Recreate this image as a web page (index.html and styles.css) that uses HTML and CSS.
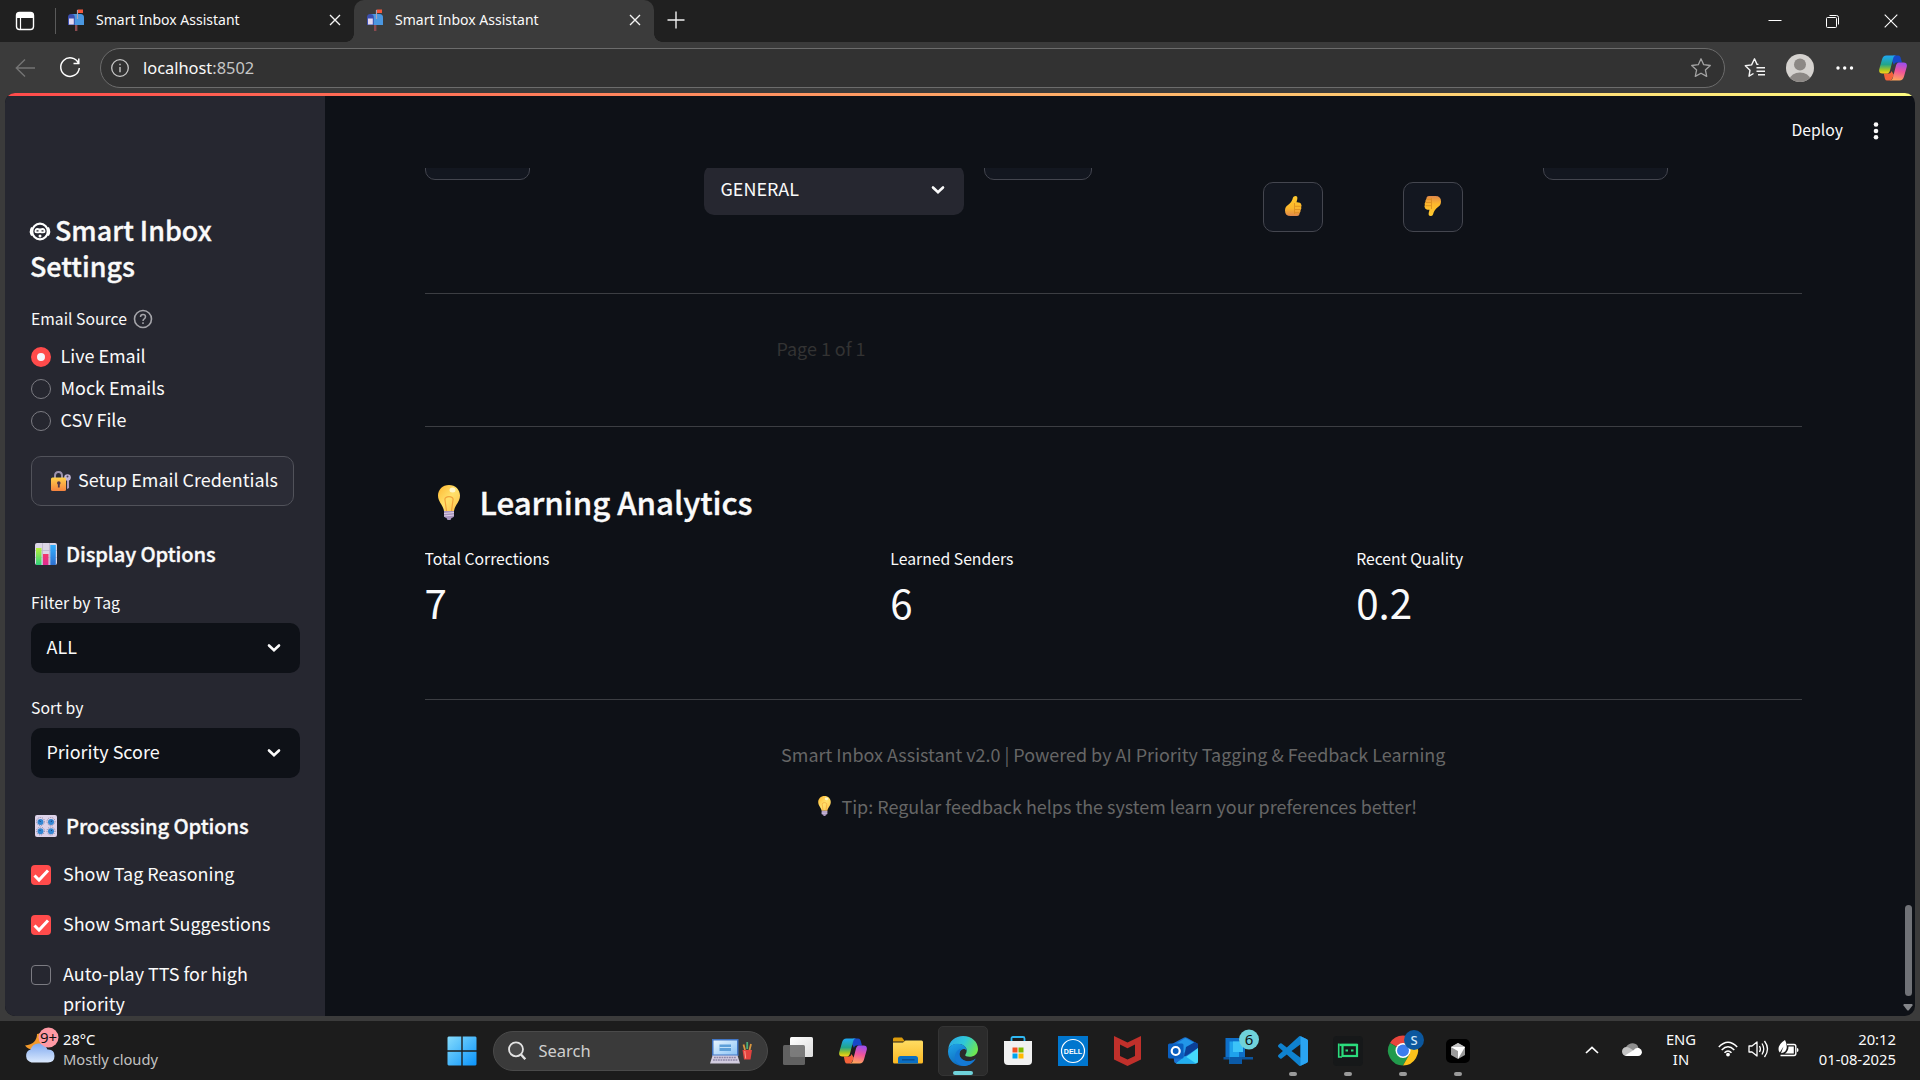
FILE: index.html
```
<!DOCTYPE html>
<html lang="en">
<head>
<meta charset="utf-8">
<title>Smart Inbox Assistant</title>
<link rel="stylesheet" href="styles.css">
</head>
<body>
<svg class="defs" aria-hidden="true">
  <defs>
    <linearGradient id="gBulb" x1="0" y1="0" x2="1" y2="1"><stop offset="0" stop-color="#ffb52e"/><stop offset=".5" stop-color="#ffe16b"/><stop offset="1" stop-color="#ffc04a"/></linearGradient>
    <linearGradient id="gThumb" x1="0" y1="0" x2="0" y2="1"><stop offset="0" stop-color="#ffca2e"/><stop offset=".6" stop-color="#fdb72c"/><stop offset="1" stop-color="#e0884a"/></linearGradient>
    <linearGradient id="gLock" x1="0" y1="0" x2="0" y2="1"><stop offset="0" stop-color="#ffd04a"/><stop offset="1" stop-color="#f5833f"/></linearGradient>
    <linearGradient id="gGreen" x1="0" y1="0" x2="0" y2="1"><stop offset="0" stop-color="#b9f03c"/><stop offset="1" stop-color="#2fd07c"/></linearGradient>
    <linearGradient id="gPink" x1="0" y1="0" x2="0" y2="1"><stop offset="0" stop-color="#f2386b"/><stop offset="1" stop-color="#e02a92"/></linearGradient>
    <linearGradient id="gBlue" x1="0" y1="0" x2="0" y2="1"><stop offset="0" stop-color="#33b0ff"/><stop offset="1" stop-color="#2d6fd0"/></linearGradient>
    <linearGradient id="gCopL" x1=".3" y1="0" x2=".3" y2="1"><stop offset="0" stop-color="#1fa8f5"/><stop offset=".5" stop-color="#22a58b"/><stop offset=".8" stop-color="#a8c622"/><stop offset="1" stop-color="#ffd21c"/></linearGradient>
    <linearGradient id="gCopR" x1=".7" y1="0" x2=".5" y2="1"><stop offset="0" stop-color="#9a4ef0"/><stop offset=".5" stop-color="#f0549a"/><stop offset="1" stop-color="#ffa35c"/></linearGradient>
    <linearGradient id="gWin" x1="0" y1="0" x2="1" y2="1"><stop offset="0" stop-color="#86dcfc"/><stop offset="1" stop-color="#0a93fb"/></linearGradient>
    <linearGradient id="gFold" x1="0" y1="0" x2="0" y2="1"><stop offset="0" stop-color="#ffdc62"/><stop offset="1" stop-color="#fbb823"/></linearGradient>
    <linearGradient id="gEdgeT" x1="0" y1=".2" x2="1" y2=".6"><stop offset="0" stop-color="#2ba8e6"/><stop offset=".5" stop-color="#2fc8d8"/><stop offset="1" stop-color="#6fe84e"/></linearGradient>
    <linearGradient id="gEdgeB" x1="0" y1="0" x2=".6" y2="1"><stop offset="0" stop-color="#1ea6ea"/><stop offset="1" stop-color="#0d62b8"/></linearGradient>
    <linearGradient id="gCloud" x1="0" y1="0" x2="0" y2="1"><stop offset="0" stop-color="#7fa9f0"/><stop offset="1" stop-color="#dbe9fd"/></linearGradient>
    <linearGradient id="gTask" x1="0" y1="0" x2="1" y2="1"><stop offset="0" stop-color="#ffffff"/><stop offset="1" stop-color="#dcdcdc"/></linearGradient>
    <linearGradient id="gLap" x1="0" y1="0" x2="1" y2="1"><stop offset="0" stop-color="#e8f5ff"/><stop offset="1" stop-color="#8cc4f5"/></linearGradient>
    <symbol id="copilot" viewBox="0 0 28 26">
      <path d="M14 .5H19C21 .5 21.500 2 22 4L23 7.500H17.500C16 7.500 15.500 8.500 15 10L13 6Z" fill="#1748c8"/>
      <path d="M8 25.500C6 25.500 6 23.500 5.500 22L4.800 18.500H10C11.500 18.500 12 17.500 12.500 16L15 20 12 25.500Z" fill="#f4633a"/>
      <path d="M7.500.5H17C15 .8 14.500 2 14 4L11 15.500C10.300 18 9 18.500 7 18.500H3.500C.5 18.500-.3 16.500.3 14L3 4.500C3.800 1.800 5 .5 7.500.5Z" fill="url(#gCopL)"/>
      <path d="M20.500 25.500H11C13 25.200 13.500 24 14 22L17 10.500C17.700 8 19 7.500 21 7.500H24.500C27.500 7.500 28.300 9.500 27.700 12L25 21.500C24.200 24.200 23 25.500 20.500 25.500Z" fill="url(#gCopR)"/>
    </symbol>
    <symbol id="mailbox" viewBox="0 0 16 22">
      <rect x="7" y="14" width="2.400" height="8" fill="#8a4a4f"/>
      <path d="M4 5h8.500A3.500 3.500 0 0 1 16 8.500V16H4Z" fill="#4a97e0"/>
      <path d="M0 8.500A3.300 3.300 0 0 1 6.800 8.500V16H0Z" fill="#3b4fb0"/>
      <path d="M1 9.500H5.800V15.500H1Z" fill="#e4d8ee"/>
      <path d="M9.500 10V.8" stroke="#a9a3b8" stroke-width="1.200"/>
      <rect x="10" y=".5" width="5" height="3.500" fill="#f2583c"/>
    </symbol>
    <symbol id="bulb" viewBox="0 0 22 35">
      <path d="M11 0C17.500 0 22 4.800 22 10.500 22 17 17 19.500 16 26H6C5 19.500 0 17 0 10.500 0 4.800 4.500 0 11 0Z" fill="url(#gBulb)"/>
      <path d="M8.500 26L7 15C5.800 10.500 16.200 10.500 15 15L13.500 26" fill="none" stroke="#f2a23a" stroke-width="1.200"/>
      <ellipse cx="14.500" cy="5" rx="3" ry="2.500" fill="#fff6c8"/>
      <path d="M6 26H16V31.500Q15 32.500 13.500 33L12.500 35H9.500L8.500 33Q7 32.500 6 31.500Z" fill="#a894bd"/>
      <path d="M6 28.500L16 27.500M6 31L16 30" stroke="#dccfe6" stroke-width="1"/>
    </symbol>
    <symbol id="thumb" viewBox="0 0 17 20">
      <path d="M8 1.500Q8.500 0 10.500 0 12.800.2 12.300 3L11.500 6.200Q15.500 6 16 8 17 9.500 16.200 11 16.700 13 15.600 14 15.800 16 14.600 17 14.600 20 12 20H5.500Q0 20 0 14.500 0 10.800 3 9 6.800 6.500 8 1.500Z" fill="url(#gThumb)"/>
      <path d="M9.500 7V18M10 10.300H15.500M10 13.500H15.200M10 16.700H14.400" stroke="#d98b1f" stroke-width=".8" fill="none"/>
    </symbol>
    <symbol id="chevron" viewBox="0 0 14 10"><path d="M2 2.500L7 7.300 12 2.500" fill="none" stroke="#fafafa" stroke-width="2.600" stroke-linecap="round"/></symbol>
    <symbol id="tick" viewBox="0 0 20 20"><path d="M3.500 10.500L8 15 17 5.500" fill="none" stroke="#fff" stroke-width="3"/></symbol>
    <symbol id="close" viewBox="0 0 12 12"><path d="M1 1L11 11M11 1L1 11" stroke="#f4f4f4" stroke-width="1.400"/></symbol>
  </defs>
</svg>

<header class="titlebar">
  <svg class="tab-actions" width="20" height="20" viewBox="0 0 20 20"><rect x="1.500" y="1.500" width="17" height="17" rx="3" fill="none" stroke="#fff" stroke-width="1.400"/><path d="M1.500 7V4.500A3 3 0 0 1 4.500 1.500H15.500A3 3 0 0 1 18.500 4.500V7Z" fill="#fff"/><path d="M5.500 6V18.500" stroke="#fff" stroke-width="1.200"/></svg>
  <span class="tab-divider"></span>
  <div class="tab">
    <svg width="16" height="22"><use href="#mailbox"/></svg>
    <span class="tab-title">Smart Inbox Assistant</span>
    <svg width="12" height="12"><use href="#close"/></svg>
  </div>
  <div class="tab active">
    <svg width="16" height="22"><use href="#mailbox"/></svg>
    <span class="tab-title">Smart Inbox Assistant</span>
    <svg width="12" height="12"><use href="#close"/></svg>
  </div>
  <svg class="new-tab" width="18" height="18" viewBox="0 0 18 18"><path d="M9 .5V17.500M.5 9H17.500" stroke="#f0f0f0" stroke-width="1.400"/></svg>
  <div class="window-controls">
    <svg width="14" height="14" viewBox="0 0 14 14"><path d="M.5 6.500H13.500" stroke="#fff"/></svg>
    <svg width="14" height="14" viewBox="0 0 14 14"><rect x=".5" y="3.500" width="10" height="10" rx="1" fill="none" stroke="#fff"/><path d="M3.500 1.500H10.500Q12.500 1.500 12.500 3.500V10.500" fill="none" stroke="#fff"/></svg>
    <svg width="14" height="14" viewBox="0 0 14 14"><path d="M.7.7L13.300 13.300M13.300.7L.7 13.300" stroke="#fff" stroke-width="1.100"/></svg>
  </div>
</header>

<div class="toolbar">
  <svg width="20" height="20" viewBox="0 0 20 20"><path d="M10 1.500L1.300 10 10 18.500M1.300 10H20" fill="none" stroke="#747474" stroke-width="1.400"/></svg>
  <svg class="reload" width="22" height="22" viewBox="0 0 22 22"><path d="M19.500 6.200A9.300 9.300 0 1 0 20.300 11M19.800 1.500V6.500H14.500" fill="none" stroke="#fff" stroke-width="1.500"/></svg>
  <div class="address">
    <svg width="20" height="20" viewBox="0 0 20 20"><circle cx="10" cy="10" r="8.300" fill="none" stroke="#c8c8c8" stroke-width="1.300"/><path d="M10 9V14.200M10 5.800V7.300" stroke="#c8c8c8" stroke-width="1.400"/></svg>
    <span class="url">localhost<span class="port">:8502</span></span>
    <svg width="22" height="22" viewBox="0 0 22 22"><path d="M11 1.800L13.700 7.700 20.300 8.500 15.400 12.900 16.700 19.400 11 16.200 5.300 19.400 6.600 12.900 1.700 8.500 8.300 7.700Z" fill="none" stroke="#a3a3a3" stroke-width="1.300" stroke-linejoin="round"/></svg>
  </div>
  <svg class="favorites" width="22" height="22" viewBox="0 0 22 22"><path d="M9.500 16.500L5 19.200 6 13.200 1.300 8.800 7.600 7.900 10.500 1.800 13 7.400H14.500M12.500 10.800H21M12.500 14.300H21M14 17.800H21" fill="none" stroke="#f4f4f4" stroke-width="1.400" stroke-linejoin="round"/></svg>
  <svg class="avatar" width="28" height="28" viewBox="0 0 28 28"><clipPath id="cAv"><circle cx="14" cy="14" r="14"/></clipPath><g clip-path="url(#cAv)"><rect width="28" height="28" fill="#d5d2cf"/><circle cx="14" cy="10.500" r="6" fill="#8c8885"/><ellipse cx="14" cy="25" rx="10" ry="6.500" fill="#8c8885"/></g></svg>
  <svg class="more" width="18" height="4" viewBox="0 0 18 4"><circle cx="2" cy="2" r="1.700" fill="#fff"/><circle cx="8.700" cy="2" r="1.700" fill="#fff"/><circle cx="15.500" cy="2" r="1.700" fill="#fff"/></svg>
  <svg class="copilot" width="28" height="26"><use href="#copilot"/></svg>
</div>

<main class="page">
  <div class="rainbow"></div>
  <aside class="sidebar">
    <h2><svg width="22" height="19" viewBox="0 0 22 19"><circle cx="11" cy="9.500" r="7.800" fill="none" stroke="#fff" stroke-width="2.200"/><path d="M3 5.500Q.5 9.500 3 13.500M19 5.500Q21.500 9.500 19 13.500" fill="none" stroke="#fff" stroke-width="2"/><path d="M5.500 10Q5.500 4.500 11 6.500 16.500 4.500 16.500 10 16 12 11 11 6 12 5.500 10Z" fill="#fff"/><path d="M7.500 8.800H9.500M12.500 8.800H14.500" stroke="#262730" stroke-width="1.300"/><circle cx="11" cy="14" r="1.500" fill="#fff"/></svg>Smart Inbox Settings</h2>
    <div class="label source">Email Source
      <svg width="20" height="20" viewBox="0 0 20 20"><circle cx="10" cy="10" r="8.500" fill="none" stroke="#a5a5aa" stroke-width="1.600"/><path d="M7.500 8Q7.500 5.600 10 5.600T12.500 7.800Q12.500 9 11.200 9.800 10 10.500 10 12M10 13.300V15" fill="none" stroke="#a5a5aa" stroke-width="1.500"/></svg>
    </div>
    <div class="radios">
      <div class="radio"><i class="on"></i><span>Live Email</span></div>
      <div class="radio"><i></i><span>Mock Emails</span></div>
      <div class="radio"><i></i><span>CSV File</span></div>
    </div>
    <div class="button setup">
      <svg width="20" height="20" viewBox="0 0 20 20"><path d="M4 8V5Q4 1 7.500 1T11 5V8" fill="none" stroke="#9d93ad" stroke-width="2"/><path d="M16 9V18L18 17V9Z" fill="#a99bbd"/><circle cx="16.500" cy="6.500" r="3.300" fill="#c3b6d4"/><circle cx="16.500" cy="5.500" r="1" fill="#4b4459"/><rect y="6.500" width="15" height="13.500" rx="1.500" fill="url(#gLock)"/><circle cx="7.800" cy="12" r="1.800" fill="#50374a"/><path d="M7.800 12V16.500" stroke="#50374a" stroke-width="1.800"/></svg>
      <span>Setup Email Credentials</span>
    </div>
    <h3><svg width="22" height="22" viewBox="0 0 22 22"><rect width="22" height="22" rx="2" fill="#dcd6e6"/><path d="M0 7.500H22M0 14.500H22M7.500 0V22M14.500 0V22" stroke="#bdb4cc" stroke-width=".8"/><rect x="1" y="5" width="5.500" height="17" fill="url(#gGreen)"/><rect x="8" y="11" width="5.500" height="11" fill="url(#gPink)"/><rect x="15.300" y="2" width="5.500" height="20" fill="url(#gBlue)"/></svg>Display Options</h3>
    <div class="label">Filter by Tag</div>
    <div class="select"><span>ALL</span><svg width="14" height="10"><use href="#chevron"/></svg></div>
    <div class="label sort">Sort by</div>
    <div class="select"><span>Priority Score</span><svg width="14" height="10"><use href="#chevron"/></svg></div>
    <h3><svg width="22" height="22" viewBox="0 0 22 22"><rect width="22" height="22" rx="2" fill="#ddd3ea"/><g fill="none" stroke="#8b7f9c" stroke-width="1" stroke-dasharray="1 1.200"><circle cx="5.500" cy="6.500" r="4"/><circle cx="16" cy="6.500" r="4"/><circle cx="5.500" cy="16" r="4"/><circle cx="16" cy="16" r="4"/></g><g fill="#3487d2"><circle cx="5.500" cy="7" r="3"/><circle cx="16" cy="7" r="3"/><circle cx="5.500" cy="16.200" r="3"/><circle cx="16" cy="16.200" r="3"/></g><path d="M5.500 7L4.500 5.500M16 7L17 5.500M5.500 16L4.500 15M16 16L17 15" stroke="#20417a"/></svg>Processing Options</h3>
    <div class="checks">
      <div class="check"><i class="on"><svg width="20" height="20"><use href="#tick"/></svg></i><span>Show Tag Reasoning</span></div>
      <div class="check"><i class="on"><svg width="20" height="20"><use href="#tick"/></svg></i><span>Show Smart Suggestions</span></div>
      <div class="check"><i></i><span>Auto-play TTS for high priority</span></div>
    </div>
  </aside>

  <section class="content">
    <div class="app-header">
      <span class="deploy">Deploy</span>
      <svg width="6" height="18" viewBox="0 0 6 18"><circle cx="3" cy="2.500" r="2.300" fill="#fafafa"/><circle cx="3" cy="9" r="2.300" fill="#fafafa"/><circle cx="3" cy="15.300" r="2.300" fill="#fafafa"/></svg>
    </div>
    <div class="scroll">
      <div class="actions">
        <div class="button cut w1"></div>
        <div class="select tag"><span>GENERAL</span><svg width="14" height="10"><use href="#chevron"/></svg></div>
        <div class="button cut w2"></div>
        <div class="button vote"><svg width="17" height="20"><use href="#thumb"/></svg></div>
        <div class="button vote"><svg class="down" width="17" height="20"><use href="#thumb"/></svg></div>
        <div class="button cut w3"></div>
      </div>
      <hr class="first">
      <div class="pager">Page 1 of 1</div>
      <hr>
      <h1><svg width="22" height="35"><use href="#bulb"/></svg>Learning Analytics</h1>
      <div class="metrics">
        <div><div class="label">Total Corrections</div><div class="value">7</div></div>
        <div><div class="label">Learned Senders</div><div class="value">6</div></div>
        <div><div class="label">Recent Quality</div><div class="value">0.2</div></div>
      </div>
      <hr>
      <footer>
        <p>Smart Inbox Assistant v2.0 | Powered by AI Priority Tagging &amp; Feedback Learning</p>
        <p><svg class="tip-bulb" width="25" height="20"><use href="#bulb"/></svg>Tip: Regular feedback helps the system learn your preferences better!</p>
      </footer>
    </div>
    <div class="scrollbar"><div class="thumb"></div><svg width="10" height="7" viewBox="0 0 10 7"><path d="M1 0H9Q10 .5 9.500 1.500L6 6Q5 7 4 6L.5 1.500Q0 .5 1 0Z" fill="#838589"/></svg></div>
  </section>
</main>

<nav class="taskbar">
  <div class="weather">
    <svg width="36" height="38" viewBox="0 0 36 38"><path d="M13 7Q13 17 1 18.500Q5 24 13 22Q21 18 18 6Z" fill="#f39a2b"/><path d="M7.500 35.500A6.800 6.800 0 0 1 6.500 22.500Q9 15.500 16 16.500 21 17 23.500 22.500 30.500 22 30.500 29 30.500 35.500 24 35.500Z" fill="url(#gCloud)"/><circle cx="24.500" cy="10.500" r="10" fill="#ff99a4"/><text x="24.500" y="15.500" text-anchor="middle" class="badge-text">9+</text></svg>
    <div class="weather-text"><div>28°C</div><div class="dim">Mostly cloudy</div></div>
  </div>
  <div class="apps">
    <svg class="start" width="30" height="30" viewBox="0 0 30 30"><path d="M1.500.5H14.300V14.300H.5V1.500ZM15.700.5H28.500L29.500 1.500V14.300H15.700ZM.5 15.700H14.300V29.500H1.500L.5 28.500ZM15.700 15.700H29.500V28.500L28.500 29.500H15.700Z" fill="url(#gWin)"/></svg>
    <div class="search">
      <svg width="20" height="20" viewBox="0 0 20 20"><circle cx="9" cy="8.300" r="7" fill="#4a4a4a" stroke="#e4e4e4" stroke-width="1.800"/><path d="M14 13.500L18.300 18.300" stroke="#e4e4e4" stroke-width="2.400"/></svg>
      <span>Search</span>
      <svg width="43" height="26" viewBox="0 0 43 26"><path d="M2 1H28.500V18H2Z" fill="#4276c4"/><path d="M3.500 2.500H27V16.500H3.500Z" fill="url(#gLap)"/><path d="M9.500 6.500H21V13H9.500Z" fill="#5d9fd8"/><path d="M9.500 9.500H21" stroke="#bfe0fa"/><path d="M2.500 17.500H27.500L30 25.500H0Z" fill="#d3cde0"/><path d="M4 19.500H26.500M3 22H27.500" stroke="#8e86a6" stroke-width="1.300" stroke-dasharray="1.800 .7"/><path d="M35 12L33.500 6.500M39.500 12L41 6" stroke="#d9963f" stroke-width="1.800"/><path d="M37.200 11V4" stroke="#4cae78" stroke-width="1.800"/><path d="M32.500 12H42L40.500 21.500H34Z" fill="#e2433f"/><path d="M34.800 13L35.700 20.500" stroke="#ff9c8a"/></svg>
    </div>
    <div class="app"><svg width="30" height="28" viewBox="0 0 30 28"><rect x="7" y="0" width="23" height="20" rx="1.500" fill="url(#gTask)"/><rect x="0" y="8" width="22" height="20" rx="1.500" fill="#6b6b6b" fill-opacity=".88"/></svg></div>
    <div class="app"><svg width="28" height="26"><use href="#copilot"/></svg></div>
    <div class="app"><svg width="30" height="27" viewBox="0 0 30 27"><path d="M0 2Q0 .5 1.500.5H9L12 4.500H0Z" fill="#dd9c0c"/><path d="M0 5.500H10L12.500 3.500H28.500Q30 3.500 30 5V25Q30 26.500 28.500 26.500H1.500Q0 26.500 0 25Z" fill="url(#gFold)"/><path d="M5 26.500V21.500Q5 19 7.500 19H22.500Q25 19 25 21.500V26.500Z" fill="#0a6fc4"/><path d="M9 22.800H21.500" stroke="#0a4a8c" stroke-width="1.300"/></svg></div>
    <div class="app current"><svg width="30" height="30" viewBox="0 0 30 30"><path d="M.3 13C1 5 7.500 0 15 0 24 0 30 6 30 13 30 18 26 20.800 21.500 20.800 18.500 20.800 17.200 20 17.200 19.300 17.200 18 18.700 17.500 18.700 14.500 18.700 11 15 8 10.500 8 5.500 8 1.500 10 .3 13Z" fill="url(#gEdgeT)"/><path d="M.3 13C2 9.300 6 7.600 10 7.700 15.500 8 18.700 11 18.700 14.500 17 12 13.500 12.500 12 15.500 10 20 13.500 24 18 25 22 25.700 26 24.500 27.700 22.500 25 27.500 20.500 30 15 30 6.500 30 0 23.500 0 15.500Z" fill="url(#gEdgeB)"/><path d="M12 15.500C10 20 13.500 24 18 25 22 25.700 26 24.500 27.700 22.500 25 27.500 20.500 30 15.500 30 9 29 6.500 24 7 20 7.500 16 10.500 12.800 13.500 12.500Q12.700 14 12 15.500Z" fill="#1479d4"/></svg></div>
    <div class="app"><svg width="30" height="30" viewBox="0 0 30 30"><path d="M8.500 6V2.500Q8.500 1 10 1H20Q21.500 1 21.500 2.500V6" fill="none" stroke="#2fb8f2" stroke-width="1.800"/><path d="M1 5H29V25Q29 29 25 29H5Q1 29 1 25Z" fill="#f1f1f1"/><path d="M9.500 11.500H14.500V16.500H9.500Z" fill="#f25022"/><path d="M15.500 11.500H20.500V16.500H15.500Z" fill="#7fba00"/><path d="M9.500 17.500H14.500V22.500H9.500Z" fill="#00a4ef"/><path d="M15.500 17.500H20.500V22.500H15.500Z" fill="#ffb900"/></svg></div>
    <div class="app"><svg width="30" height="30" viewBox="0 0 30 30"><rect width="30" height="30" fill="#0076ce"/><circle cx="15" cy="15" r="11.500" fill="none" stroke="#fff" stroke-width="1.200"/><text x="15" y="17.800" text-anchor="middle" class="dell">DELL</text></svg></div>
    <div class="app"><svg width="27" height="30" viewBox="0 0 27 30"><path d="M0 0L13.500 6.500 27 0V23.500L13.500 30 0 23.500Z" fill="#c0302b"/><path d="M6 8.500L13.500 12.200 21 8.500V20L13.500 23.500 6 20Z" fill="#1c1c1c"/></svg></div>
    <div class="app"><svg width="30" height="27" viewBox="0 0 30 27"><path d="M4 7L16 .5Q17.500 0 19 .7L30 7V24Q30 26.500 27.500 26.500H9Q6 26.500 6 23.500Z" fill="#1a6fd0"/><path d="M6 8L17.500 1 29 7.500 14 17Z" fill="#2296e8"/><path d="M18 10L27 5 30 7V11L16 20Z" fill="#0b3f96"/><path d="M30 11V24Q30 26.500 27.500 26.500H8L22 17Z" fill="#45d8fa"/><path d="M8 26.500L17 19 28 26.500Z" fill="#22aef0"/><rect y="6.500" width="15.500" height="15" rx="1.500" fill="#0a5fc0"/><circle cx="7.700" cy="14" r="4" fill="none" stroke="#fff" stroke-width="2.200"/></svg></div>
    <div class="app"><svg width="36" height="36" viewBox="-1 4 36 36"><path d="M4.500 9H24V28H4.500Z" fill="#0e6ec8"/><path d="M2.500 28H12V30.500H2.500ZM21 28H32V30.500H21Z" fill="#0c559e"/><path d="M8.500 12.500H18V35H8.500Z" fill="#1ea2ec"/><path d="M12 12.500H22V23H12Z" fill="#3cc4f8"/><path d="M8.500 28H21V35H8.500Z" fill="#0b5aa8"/><circle cx="28" cy="10.500" r="10" fill="#6fd2da"/><text x="28" y="16" text-anchor="middle" class="badge-text">6</text></svg></div>
    <div class="app open"><svg width="30" height="30" viewBox="0 0 24 24"><path d="M23.150 2.587L18.210.21a1.494 1.494 0 0 0-1.705.29l-9.460 8.630-4.120-3.128a.999.999 0 0 0-1.276.057L.327 7.261A1 1 0 0 0 .326 8.740L3.899 12 .326 15.260a1 1 0 0 0 .001 1.479L1.650 17.940a.999.999 0 0 0 1.276.057l4.120-3.128 9.460 8.630a1.492 1.492 0 0 0 1.704.29l4.942-2.377A1.500 1.500 0 0 0 24 20.060V3.939a1.500 1.500 0 0 0-.85-1.352zm-5.146 14.861L10.826 12l7.178-5.448v10.896z" fill="#0f82cf"/><path d="M18 .15L23.150 2.587A1.500 1.500 0 0 1 24 3.939V20.060A1.500 1.500 0 0 1 23.150 21.400L18 23.850Z" fill="#2aa4f2"/></svg></div>
    <div class="app open"><svg width="30" height="30" viewBox="0 0 30 30"><rect width="30" height="30" rx="4" fill="#161819"/><path d="M5.700 7.500V21H9" fill="none" stroke="#2bdc7c" stroke-width="1.600"/><rect x="6.500" y="7.700" width="17.800" height="2.400" fill="#2bdc7c"/><rect x="9.500" y="9" width="14.500" height="11" fill="none" stroke="#2bdc7c" stroke-width="2.200"/><path d="M12.500 14.500H15M18 14.500H20.500" stroke="#2bdc7c" stroke-width="2.200"/></svg></div>
    <div class="app open"><svg width="36" height="36" viewBox="-3 2.500 36 36"><path d="M15 20L2 12.500A15 15 0 0 1 28 12.500H15Z" fill="#e8453c"/><path d="M15 20L2 12.500A15 15 0 0 0 15 35L21.500 23.700Z" fill="#229a4c"/><path d="M15 20L21.500 23.700 15 35A15 15 0 0 0 28 12.500H15Z" fill="#fcc21b"/><circle cx="15" cy="20" r="7.500" fill="#fff"/><circle cx="15" cy="20" r="6" fill="#3b7ded"/><circle cx="26" cy="9.500" r="10" fill="#0b579e"/><text x="26" y="14.500" text-anchor="middle" class="chrome-badge">S</text></svg></div>
    <div class="app open"><svg width="24" height="24" viewBox="0 0 24 24"><rect width="24" height="24" rx="5" fill="#000"/><path d="M12 4L19 8V16L12 20 5 16V8Z" fill="#9a9a9a"/><path d="M5 8L12 4 19 8 12 12Z" fill="#c4c4c4"/><path d="M5 8H19L12 20V12Z" fill="#fff"/></svg></div>
  </div>
  <div class="tray">
    <svg class="up" width="14" height="8" viewBox="0 0 14 8"><path d="M1 7L7 1.300 13 7" fill="none" stroke="#fff" stroke-width="1.700"/></svg>
    <svg class="cloud" width="20" height="13" viewBox="0 0 20 13"><path d="M4 4Q7 0 11 .3 15.500.8 16.300 4.500L8 9Z" fill="#8f8f8f"/><path d="M4.500 13A4.500 4.500 0 0 1 4.500 4Q7 4 12 8L7 13Z" fill="#c4c4c4"/><path d="M3 12.500L11 7.500Q14 4 17 5 20 6.500 20 9.300 19.500 13 16 13H5Z" fill="#fff"/></svg>
    <div class="lang"><div>ENG</div><div>IN</div></div>
    <svg class="wifi" width="20" height="16" viewBox="0 0 20 16"><path d="M.8 6Q10-3.500 19.200 6M3.700 9Q10 2.500 16.300 9M6.500 11.800Q10 8.200 13.500 11.800" fill="none" stroke="#fff" stroke-width="1.500"/><circle cx="10" cy="13.600" r="1.900" fill="#fff"/></svg>
    <svg class="sound" width="21" height="18" viewBox="0 0 21 18"><path d="M1 6H4L9 2V16L4 12H1Z" fill="none" stroke="#fff" stroke-width="1.300" stroke-linejoin="round"/><path d="M11.500 6Q13.300 9 11.500 12M14 3.500Q17.500 9 14 14.500M16.500 1Q22.500 9 16.500 17" fill="none" stroke="#fff" stroke-width="1.300"/></svg>
    <svg class="battery" width="21" height="18" viewBox="0 0 21 18"><path d="M9 4.500H16Q17.800 4.500 17.800 6.500V13.500Q17.800 15.500 16 15.500H2.500" fill="none" stroke="#fff" stroke-width="1.400"/><path d="M10.500 6.500H15.800V13.500H7Q10.500 11 10.500 6.500Z" fill="#fff"/><path d="M19 8Q20.500 8 20.500 10T19 12Z" fill="#fff"/><path d="M7 0Q.5 4 .5 9 .5 11.500 1.800 12.500L5.500 6.500 3 13.300Q8.800 12.500 8.800 7 8.800 3 7 0Z" fill="#fff"/></svg>
    <div class="clock"><div>20:12</div><div>01-08-2025</div></div>
  </div>
</nav>
</body>
</html>
```
FILE: styles.css
```
* { box-sizing: border-box; }
body {
  margin: 0;
  width: 1920px;
  height: 1080px;
  overflow: hidden;
  display: flex;
  flex-direction: column;
  background: #3b3b3b;
  color: #fafafa;
  font: 15px "Noto Sans", sans-serif;
}
svg { display: block; flex: none; overflow: visible; }
.defs { width: 0; height: 0; position: absolute; }
h1, h2, h3, p { margin: 0; }

/* Browser title bar */
.titlebar { height: 42px; flex: none; background: #202020; display: flex; align-items: center; }
.tab-actions { margin-left: 15px; }
.tab-divider { width: 1px; height: 26px; margin-left: 20px; background: #5a5a5a; }
.tab { width: 298px; height: 42px; padding: 0 13px 2px 12px; display: flex; align-items: center; }
.tab-title { flex: 1; margin-left: 12px; font-size: 14px; line-height: 20px; white-space: nowrap; }
.tab.active { position: relative; width: 300px; padding-left: 13px; background: #3b3b3b; border-radius: 10px 10px 0 0; }
.tab.active::before, .tab.active::after { content: ""; position: absolute; bottom: 0; width: 8px; height: 8px; }
.tab.active::before { left: -8px; background: radial-gradient(circle at 0 0, transparent 7.5px, #3b3b3b 8px); }
.tab.active::after { right: -8px; background: radial-gradient(circle at 100% 0, transparent 7.5px, #3b3b3b 8px); }
.new-tab { margin: 0 0 3px 13px; }
.window-controls { margin-left: auto; padding-right: 22px; display: flex; gap: 44px; }

/* Browser toolbar */
.toolbar { height: 51px; flex: none; padding: 0 13px 0 15px; display: flex; align-items: center; }
.reload { margin-left: 24px; }
.address { width: 1625px; height: 40px; margin-left: 19px; padding: 0 12px 0 9px; display: flex; align-items: center; border: 1px solid #6c6c6c; border-radius: 20px; background: #323232; }
.url { flex: 1; margin-left: 13px; font-size: 16.400px; line-height: 24px; }
.port { color: #c6c6c6; }
.favorites { margin-left: 19px; }
.avatar { margin-left: 20px; }
.more { margin-left: 22px; }
.copilot { margin-left: auto; }

/* Page */
.page { position: relative; height: 923px; flex: none; margin: 0 5px; display: flex; overflow: hidden; border-radius: 10px; background: #0e1117; font-family: "Noto Sans CJK SC", sans-serif; font-size: 17.950px; }
.rainbow { position: absolute; inset: 0 0 auto; height: 3px; background: linear-gradient(90deg, #ff4b4b, #fffd80); }
.sidebar { width: 320px; padding: 119px 25px 0 26px; background: #262730; }
.label { height: 24px; line-height: 26px; font-size: 15.750px; }
h1, h2, h3 { font-weight: 500; -webkit-text-stroke: .35px currentColor; }
.sidebar h2 { height: 72px; margin-left: -1px; font-size: 26.900px; line-height: 36px; }
h2 svg { display: inline-block; margin: 0 4px 0 -1px; vertical-align: 0; }
.source { margin-top: 23px; display: flex; align-items: center; gap: 6px; }
.radios { margin-top: 10px; }
.radio { height: 32px; display: flex; align-items: center; gap: 9.500px; }
.radio span, .button span, .select span { padding-bottom: 5px; line-height: 24px; }
.radio i { width: 20px; height: 20px; border: 1px solid #7b7b82; border-radius: 50%; }
.radio i.on { border: 6.500px solid #ff4b4b; background: #f4f6fc; }
.button { display: flex; align-items: center; border: 1px solid #44464f; border-radius: 10px; background: #131720; }
.setup { width: 263px; height: 50px; margin-top: 19px; padding-left: 19px; gap: 7px; background: #2b2c36; border-color: #51525a; white-space: nowrap; }
h3 { height: 27px; margin-top: 34px; padding-left: 4px; display: flex; align-items: center; gap: 9px; font-size: 20.150px; line-height: 27px; letter-spacing: -.1px; white-space: nowrap; }
h3 + .label { margin-top: 23px; }
.select { height: 50px; margin-top: 9px; padding: 0 19px 0 15.500px; display: flex; align-items: center; justify-content: space-between; border-radius: 10px; background: #0e1117; }
.sort { margin-top: 22px; }
.checks { margin-top: 21px; display: flex; flex-direction: column; gap: 20px; }
.check { display: flex; gap: 12px; line-height: 30px; }
.check span { margin-top: -2px; margin-bottom: 2px; }
.check i { flex: none; width: 20px; height: 20px; margin-top: 5px; border: 1px solid #7b7b82; border-radius: 4px; }
.check i.on { border: 0; background: #ff4b4b; }

.content { position: relative; flex: 1; padding: 0 113px 0 100px; }
.app-header { height: 75px; margin-right: -77px; padding-top: 1px; display: flex; justify-content: flex-end; align-items: center; gap: 30px; }
.deploy { font-size: 15.750px; line-height: 24px; padding-bottom: 2px; }
.scroll { height: 848px; overflow: hidden; }
.actions { height: 125px; display: grid; grid-template-columns: repeat(3, 259.500px) repeat(2, 119.750px) 259.500px; column-gap: 20px; align-items: start; }
.cut { height: 50px; margin-top: -38px; }
.w1 { width: 105px; }
.w2 { width: 108px; }
.w3 { width: 125px; }
.tag { margin-top: -3px; padding-left: 16.500px; background: #262730; }
.vote { width: 60px; height: 50px; margin-top: 14px; justify-content: center; padding-bottom: 2px; }
.down { transform: rotate(180deg); }
hr { height: 1px; margin: 0; border: 0; background: #3c3e43; }
.pager { height: 132px; padding: 42px 0 0 352px; line-height: 24px; color: #333; }
h1 { height: 42px; margin-top: 54px; padding-left: 13px; display: flex; align-items: center; gap: 20px; font-size: 31.300px; line-height: 42px; letter-spacing: -.07px; }
.metrics { margin-top: 23px; height: 153px; display: grid; grid-template-columns: repeat(3, 1fr); column-gap: 20px; }
.value { margin-top: 4px; font-size: 40.300px; line-height: 56px; }
footer { padding-top: 42px; display: flex; flex-direction: column; gap: 28px; align-items: center; color: #666; line-height: 24px; }
footer p { display: flex; align-items: center; gap: 7px; white-space: nowrap; }
.tip-bulb { margin: 0 -3px 0 3px; }
.scrollbar { position: absolute; right: 2px; bottom: 5px; width: 10px; display: flex; flex-direction: column; align-items: center; gap: 8px; }
.scrollbar .thumb { width: 7px; height: 91px; border-radius: 4px; background: #707277; }

/* Taskbar */
.taskbar { height: 59px; margin-top: 5px; flex: none; display: flex; background: #1c1c1c; }
.weather { width: 446.500px; padding: 6px 0 0 24px; display: flex; gap: 3px; }
.weather-text { padding-top: 2px; line-height: 20px; font-size: 14.700px; }
.dim { color: #c2c2c2; }
.badge-text { font-size: 15px; fill: #111; }
.chrome-badge { font-size: 13px; fill: #cfe6f7; font-weight: 500; }
.dell { font: bold 7px "Liberation Sans", sans-serif; fill: #fff; }
.apps { display: flex; align-items: center; }
.search { width: 275px; height: 40px; margin: 0 2.500px 0 16px; padding: 0 14px 0 13px; display: flex; align-items: center; border-radius: 20px; background: #3a3a3a; border: 1px solid #4a4a4a; }
.search span { flex: 1; margin-left: 12px; font-size: 16.500px; color: #cfcfcf; }
.app { position: relative; width: 50px; height: 50px; margin: 0 2.500px; display: flex; align-items: center; justify-content: center; border-radius: 5px; }
.current { background: #2b2b2b; border: 1px solid #343434; }
.open::after, .current::after { content: ""; position: absolute; bottom: 0; left: 50%; width: 8px; height: 4px; margin-left: -4px; border-radius: 2px; background: #9a9a9a; }
.current::after { width: 20px; margin-left: -10px; background: #6fd2da; }
.tray { margin-left: auto; padding: 0 24px 3px 0; display: flex; align-items: center; font-size: 14.800px; line-height: 20px; }
.up { margin-top: 2px; }
.cloud { margin-left: 23px; }
.lang { width: 36px; margin-left: 21px; text-align: center; }
.wifi { margin-left: 19px; }
.sound { margin-left: 10px; }
.battery { margin-left: 9px; }
.clock { width: 80px; margin-left: 17px; text-align: right; }
```
